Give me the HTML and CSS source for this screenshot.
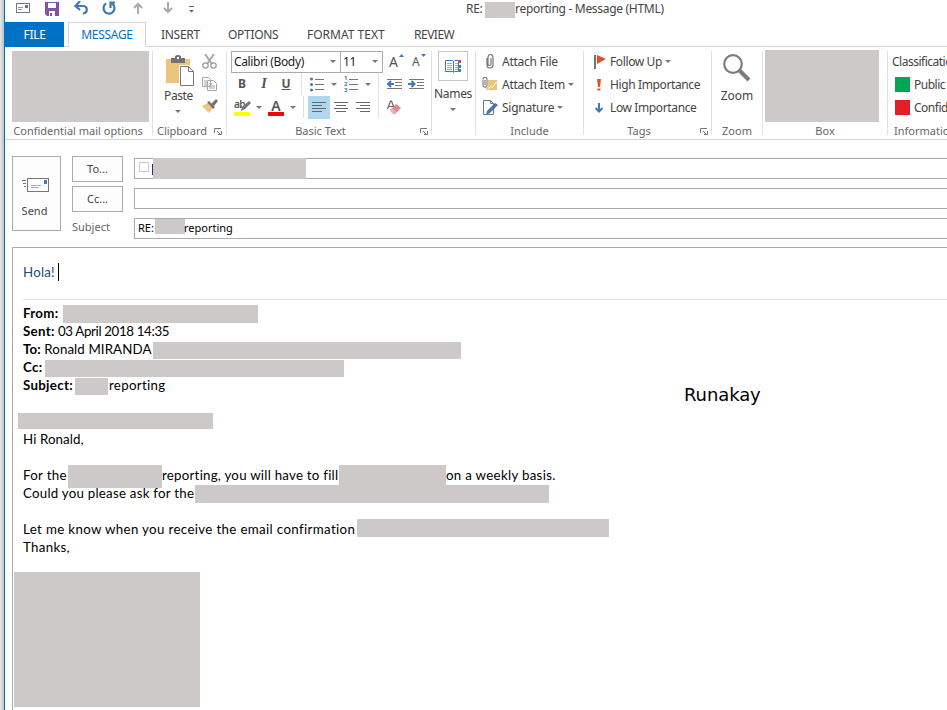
FILE: index.html
```html
<!DOCTYPE html>
<html lang="en">
<head>
    <meta charset="UTF-8">
    <meta name="viewport" content="width=device-width, initial-scale=1.0">
    <title>RE: reporting - Message (HTML)</title>
    <link rel="stylesheet" href="styles.css">
</head>
<body>
    <div class="window">
        <header class="titlebar">
            <div class="quick-access">
                <svg width="14" height="14" viewBox="0 0 14 14"><rect x=".5" y="2.5" width="13" height="9" fill="#fff" stroke="#777"/><path d="M2 6.500h5M2 8.500h4" stroke="#999"/><path d="M9 4h3v3H9z" fill="#3f7cbf"/></svg>
                <svg width="14" height="15" viewBox="0 0 14 15"><path d="M0 1h14v14H2l-2-2z" fill="#8551a8"/><path d="M3 2h8v5H3zM4 10h6v5H4z" fill="#fff"/><path d="M5 12h2v3H5z" fill="#8551a8"/></svg>
                <svg width="15" height="14" viewBox="0 0 15 14"><path d="M2 5h7c5 0 5 7 0 7.500M6 0L1.500 5 6 9" fill="none" stroke="#3f78b5" stroke-width="2.200"/></svg>
                <svg class="redo" width="14" height="14" viewBox="0 0 14 14"><path d="M4 2.500a5.500 5.500 0 1 0 6 0M8.500 7V1.500H13" fill="none" stroke="#3f78b5" stroke-width="2.200"/></svg>
                <svg width="10" height="13" viewBox="0 0 10 13"><path d="M5 12V2M1 6l4-4 4 4" fill="none" stroke="#aaa" stroke-width="2"/></svg>
                <svg class="next" width="10" height="13" viewBox="0 0 10 13"><path d="M5 0v10M1 6l4 4 4-4" fill="none" stroke="#aaa" stroke-width="2"/></svg>
                <svg class="customize" width="5" height="7" viewBox="0 0 5 7"><path d="M0 .5h5" stroke="#666"/><path d="M0 4h5L2.500 6.500z" fill="#666"/></svg>
            </div>
            <div class="title">
                <span class="title-re">RE:</span>
                <span class="redacted title-redacted"></span>
                <span class="title-text">reporting - Message (HTML)</span>
            </div>
        </header>

        <nav class="tabs">
            <span class="tab file">FILE</span>
            <span class="tab active">MESSAGE</span>
            <span class="tab insert">INSERT</span>
            <span class="tab options">OPTIONS</span>
            <span class="tab format">FORMAT TEXT</span>
            <span class="tab review">REVIEW</span>
        </nav>

        <section class="ribbon">
            <div class="group">
                <div class="redacted redacted-options"></div>
                <div class="group-label options-label">Confidential mail options</div>
            </div>

            <div class="group">
                <div class="clipboard">
                    <div class="paste">
                        <svg width="28" height="31" viewBox="0 0 28 31"><path d="M0 4h24v24H0z" fill="#ecc57c"/><path d="M5 3h4V1l2-1h2l2 1v2h4v5H5z" fill="#737373"/><path d="M11 2h2v2h-2z" fill="#fff"/><path d="M13 10h10l5 5v16H13z" fill="#fff"/><path d="M14.500 11.500h8l5 5v14h-13z" fill="#fff" stroke="#777"/><path d="M22.500 11.500v5h5" fill="none" stroke="#777"/></svg>
                        <span>Paste</span>
                        <i class="arrow"></i>
                    </div>
                    <div class="clip-tools">
                        <svg width="15" height="15" viewBox="0 0 15 15"><path d="M3 0l7 10M12 0L5 10" stroke="#aaa" stroke-width="2"/><circle cx="3.500" cy="11.500" r="2.700" fill="none" stroke="#999" stroke-width="1.200"/><circle cx="11.500" cy="11.500" r="2.700" fill="none" stroke="#999" stroke-width="1.200"/></svg>
                        <svg width="15" height="14" viewBox="0 0 15 14"><path d="M.5.5h6l2 2v7h-8zM5.500 3.500h6l3 3v7h-9z" fill="#fff" stroke="#aaa3ad"/><path d="M2 4h3M2 6h3M2 8h3M7 7h3M7 9h6M7 11h6" stroke="#aaa3ad"/></svg>
                        <svg width="16" height="14" viewBox="0 0 16 14"><path d="M0 7l6-3 5 5-4 5z" fill="#ecc57c"/><path d="M5 3l2-1 6 6-2 2z" fill="#737373"/><path d="M9 5l5-5 2 2-4 5z" fill="#737373"/></svg>
                    </div>
                </div>
                <div class="group-label">Clipboard<svg class="launcher" width="8" height="7" viewBox="0 0 8 7"><path d="M.5 5V.5H7M3 3l3 3M7.500 3v3.500H4" fill="none" stroke="#777"/></svg></div>
            </div>

            <div class="group">
                <div class="basic-text">
                    <div class="font-row">
                        <div class="select font-name">Calibri (Body)<i class="arrow"></i></div>
                        <div class="select font-size">11<i class="arrow"></i></div>
                        <div class="size-button grow">A<svg width="5" height="3" viewBox="0 0 5 3"><path d="M0 3l2.500-3L5 3z" fill="#3f78b5"/></svg></div>
                        <div class="size-button shrink">A<svg width="5" height="3" viewBox="0 0 5 3"><path d="M0 0h5L2.500 3z" fill="#3f78b5"/></svg></div>
                    </div>
                    <div class="format-row">
                        <b class="letter">B</b><em class="letter italic">I</em><u class="letter">U</u>
                        <i class="divider first"></i>
                        <svg width="14" height="15" viewBox="0 0 14 15"><path d="M5 2.500h9M5 7.500h9M5 12.500h9" stroke="#777"/><g fill="#3f78b5"><circle cx="1.500" cy="2" r="1.500"/><circle cx="1.500" cy="7.500" r="1.500"/><circle cx="1.500" cy="13" r="1.500"/></g></svg>
                        <i class="arrow"></i>
                        <div class="numbering">
                            <div class="digits"><span>1</span><span>2</span><span>3</span></div>
                            <svg width="9" height="15" viewBox="0 0 9 15"><path d="M0 2.500h9M0 7.500h9M0 12.500h9" stroke="#777"/></svg>
                        </div>
                        <i class="arrow"></i>
                        <i class="divider second"></i>
                        <svg width="16" height="12" viewBox="0 0 16 12"><path d="M1 1.500h15M9 4.500h7M9 7.500h7M1 10.500h15" stroke="#777"/><path d="M8 6H2M5 3L2 6l3 3" stroke="#3f78b5" stroke-width="2" fill="none"/></svg>
                        <svg class="indent" width="16" height="12" viewBox="0 0 16 12"><path d="M1 1.500h15M9 4.500h7M9 7.500h7M1 10.500h15" stroke="#777"/><path d="M0 6h6M3.500 3l3 3-3 3" stroke="#3f78b5" stroke-width="2" fill="none"/></svg>
                    </div>
                    <div class="color-row">
                        <div class="color-button highlight"><span>ab</span><svg width="10" height="10" viewBox="0 0 10 10"><path d="M8 0l2 2-6 6-4 2 1-4z" fill="#777"/></svg></div>
                        <i class="arrow"></i>
                        <div class="color-button font-color"><span>A</span></div>
                        <i class="arrow"></i>
                        <i class="divider first"></i>
                        <span class="align selected"><svg width="14" height="11" viewBox="0 0 14 11"><path d="M0 .5h14M0 3.500h10M0 6.500h14M0 9.500h10" stroke="#666"/></svg></span>
                        <span class="align"><svg width="14" height="11" viewBox="0 0 14 11"><path d="M0 .5h14M2 3.500h10M0 6.500h14M2 9.500h10" stroke="#666"/></svg></span>
                        <span class="align"><svg width="14" height="11" viewBox="0 0 14 11"><path d="M0 .5h14M4 3.500h10M0 6.500h14M4 9.500h10" stroke="#666"/></svg></span>
                        <i class="divider second"></i>
                        <svg width="15" height="15" viewBox="0 0 15 15"><path d="M.5 9L3.500 1h1L7.500 9M1.500 6.500h5" fill="none" stroke="#666" stroke-width="1.200"/><path d="M3 10l6-6 5 4-6 6H6z" fill="#e68497"/><path d="M3 10l2-2 4 4-2 2H6z" fill="#efb0bd"/></svg>
                    </div>
                </div>
                <div class="group-label basic-label">Basic Text<svg class="launcher far" width="8" height="7" viewBox="0 0 8 7"><path d="M.5 5V.5H7M3 3l3 3M7.500 3v3.500H4" fill="none" stroke="#777"/></svg></div>
            </div>

            <div class="group">
                <div class="names">
                    <span class="names-icon"><svg width="17" height="15" viewBox="0 0 17 15"><path d="M.5 1.500h7l1 1 1-1h4v11h-4l-1 1-1-1h-7z" fill="#fff" stroke="#3f78b5"/><path d="M8.500 2v11" stroke="#3f78b5"/><path d="M2 4.500h5M2 6.500h5M2 8.500h5M2 10.500h5M10 4.500h3M10 6.500h3M10 8.500h3M10 10.500h3" stroke="#aaa"/><path d="M14 1h2v3h-2z" fill="#d24726"/><path d="M14 6h2v3h-2z" fill="#3f78b5"/><path d="M14 10h2v3h-2z" fill="#2d9b60"/></svg></span>
                    <span>Names</span>
                    <i class="arrow"></i>
                </div>
            </div>

            <div class="group">
                <ul class="commands include">
                    <li><svg width="16" height="16" viewBox="0 0 16 16"><path d="M5 4v7c0 4 6 4 6 0V3.500c0-4-5-4-5 0V10c0 2 3 2 3 0V4" fill="none" stroke="#777" stroke-width="1.200"/></svg><span>Attach File</span></li>
                    <li><svg width="16" height="16" viewBox="0 0 16 16"><path d="M6 3h9v10H4z" fill="#ecc57c"/><path d="M6 11.500l3-2 1 1 5-6" fill="none" stroke="#fff"/><path d="M.6 0H6v10H.6z" fill="#fff"/><path d="M1 3v5c0 3 4 3 4 0V2.500c0-3-4-3-4 0M3 3v5" fill="none" stroke="#777" stroke-width="1.100"/></svg><span>Attach Item</span><i class="arrow"></i></li>
                    <li><svg width="16" height="16" viewBox="0 0 16 16"><path d="M1.500.500h7l3 3v11h-10z" fill="#fff" stroke="#777"/><path d="M8.500.500v3h3" fill="none" stroke="#777"/><path d="M13 3l3 2-8 8-4 2 1-4z" fill="#3f78b5"/></svg><span>Signature</span><i class="arrow"></i></li>
                </ul>
                <div class="group-label">Include</div>
            </div>

            <div class="group">
                <ul class="commands tags">
                    <li><svg width="12" height="16" viewBox="0 0 12 16"><path d="M0 1h2v14H0z" fill="#737373"/><path d="M3 1l9 4-9 5z" fill="#d9532f"/></svg><span>Follow Up</span><i class="arrow"></i></li>
                    <li><svg width="12" height="16" viewBox="0 0 12 16"><path d="M3 2h4l-1 8H4zM3.500 11.500h3v2h-3z" fill="#d9532f"/></svg><span>High Importance</span></li>
                    <li><svg width="12" height="16" viewBox="0 0 12 16"><path d="M5 3v8M1.500 8L5 11.500 8.500 8" fill="none" stroke="#3f78b5" stroke-width="2"/></svg><span>Low Importance</span></li>
                </ul>
                <div class="group-label tags-label">Tags<svg class="launcher far" width="8" height="7" viewBox="0 0 8 7"><path d="M.5 5V.5H7M3 3l3 3M7.500 3v3.500H4" fill="none" stroke="#777"/></svg></div>
            </div>

            <div class="group">
                <div class="zoom">
                    <svg width="28" height="28" viewBox="0 0 28 28"><circle cx="10" cy="10" r="8.800" fill="#fff" stroke="#7c7c7c" stroke-width="2.200"/><path d="M16 16l10 10" stroke="#7c7c7c" stroke-width="4"/></svg>
                    <span>Zoom</span>
                </div>
                <div class="group-label">Zoom</div>
            </div>

            <div class="group">
                <div class="redacted redacted-box"></div>
                <div class="group-label box-label">Box</div>
            </div>

            <div class="group classification">
                <ul class="commands">
                    <li><span>Classification</span></li>
                    <li><i class="swatch green"></i><span>Public</span></li>
                    <li><i class="swatch red"></i><span>Confidential</span></li>
                </ul>
                <div class="group-label">Information</div>
            </div>
        </section>

        <section class="header-form">
            <button class="send">
                <svg width="27" height="14" viewBox="0 0 27 14"><rect x="5.500" y=".5" width="21" height="13" fill="#fff" stroke="#777"/><path d="M9 7.500h10M9 9.500h8" stroke="#aaa"/><path d="M22 2h3v4h-3z" fill="#3f7cbf"/><path d="M0 2.500h4M1 5.500h3M2 8.500h2" stroke="#777"/></svg>
                <span>Send</span>
            </button>
            <div class="field-labels">
                <button class="pick">To...</button>
                <button class="pick">Cc...</button>
                <span class="subject-label">Subject</span>
            </div>
            <div class="fields">
                <div class="field"><i class="presence"></i><i class="link-edge"></i><span class="redacted redacted-to"></span></div>
                <div class="field"></div>
                <div class="field"><span class="field-re">RE:</span><span class="redacted redacted-subject"></span><span class="field-text">reporting</span></div>
            </div>
        </section>

        <main class="message">
            <div class="reply">Hola!<i class="caret"></i></div>
            <div class="original">
                <p><b class="from">From:</b><span class="redacted r-from"></span></p>
                <p><b class="sent">Sent:</b><span class="date">03 April 2018 14:35</span></p>
                <p><span class="to"><b>To:</b> Ronald MIRANDA</span><span class="redacted r-to"></span></p>
                <p><b class="cc">Cc:</b><span class="redacted r-cc"></span></p>
                <p><b class="subject">Subject:</b><span class="redacted r-subject"></span><span>reporting</span></p>
                <p></p>
                <p><span class="redacted r-name"></span></p>
                <p class="greeting">Hi Ronald,</p>
                <p></p>
                <p><span class="for-the">For the</span><span class="redacted r-report"></span><span class="fill">reporting, you will have to fill</span><span class="redacted r-fill"></span><span>on a weekly basis.</span></p>
                <p><span class="could">Could you please ask for the</span><span class="redacted r-ask"></span></p>
                <p></p>
                <p><span class="let">Let me know when you receive the email confirmation</span><span class="redacted r-confirm"></span></p>
                <p>Thanks,</p>
            </div>
            <div class="redacted r-signature"></div>
            <div class="note">Runakay</div>
        </main>
    </div>
</body>
</html>
```
FILE: styles.css
```css
* {
    box-sizing: border-box;
}
body {
    margin: 0;
    height: 710px;
    overflow: hidden;
    background: linear-gradient(90deg, #e8e8e8, #c0c0c0) 0 0 / 4px 100% no-repeat;
    color: #444;
    font-family: 'Noto Sans', 'Open Sans', sans-serif;
    font-size: 12px;
    line-height: 16px;
    white-space: nowrap;
}
svg {
    display: block;
    flex: none;
}
.window {
    height: 710px;
    margin-left: 4px;
    border-left: 1px solid #0072c6;
    overflow: hidden;
}
.redacted {
    display: block;
    flex: none;
    background: #cdc9c8;
}
.arrow {
    flex: none;
    border: 3px solid transparent;
    border-top-color: #777;
    border-bottom: 0;
}
.titlebar {
    display: flex;
    height: 22px;
}
.quick-access {
    display: flex;
    width: 461px;
    padding-left: 11px;
    height: 16px;
    align-items: center;
    gap: 15px;
}
.redo {
    margin: 0 2px 0 -2px;
}
.next {
    margin-left: 5px;
}
.customize {
    margin: 2px 0 0 1px;
}
.title {
    display: flex;
    padding-top: 1px;
    letter-spacing: -0.3px;
}
.title-re {
    width: 19px;
}
.title-redacted {
    width: 30px;
    height: 16px;
    margin-top: 1px;
}
.tabs {
    display: flex;
    height: 25px;
    border-bottom: 1px solid #d4d4d4;
    line-height: 25px;
}
.tab.file {
    width: 59px;
    height: 25px;
    margin-right: 4px;
    background: #0072c6;
    color: #fff;
    text-align: center;
    letter-spacing: -0.3px;
}
.tab.active {
    width: 78px;
    height: 25px;
    border: 1px solid #d4d4d4;
    border-bottom: 0;
    background: #fff;
    color: #0072c6;
    text-align: center;
    line-height: 24px;
    margin-right: 15px;
    letter-spacing: -0.3px;
}
.insert {
    width: 67px;
    letter-spacing: -0.3px;
}
.options {
    width: 79px;
    letter-spacing: -0.3px;
}
.format {
    width: 107px;
}
.review {
    letter-spacing: -0.5px;
}
.ribbon {
    display: grid;
    grid-template-columns: 148px 74px 205px 44px 108px 128px 51px 125px 1fr;
    height: 93px;
    padding-top: 4px;
    border-bottom: 1px solid #d4d4d4;
}
.group {
    display: flex;
    flex-direction: column;
    min-width: 0;
    height: 84px;
    border-right: 1px solid #e1e1e1;
}
.group-label {
    position: relative;
    display: flex;
    justify-content: center;
    align-items: center;
    height: 16px;
    margin: auto 0 -4px;
    color: #666;
    font-size: 11px;
}
.launcher {
    margin: 1px 0 0 7px;
}
.launcher.far {
    position: absolute;
    right: 3px;
    top: 5px;
    margin: 0;
}
.options-label {
    padding-right: 1px;
}
.basic-label {
    padding-right: 17px;
}
.tags-label {
    padding-right: 17px;
}
.redacted-options {
    width: 137px;
    height: 71px;
    margin-left: 7px;
}
.clipboard {
    display: flex;
    padding: 4px 0 0 10px;
}
.paste {
    display: flex;
    flex-direction: column;
    align-items: center;
    width: 31px;
    margin-right: 8px;
}
.paste span {
    margin: 2px 0 6px;
    letter-spacing: -0.4px;
}
.paste svg {
    margin-left: 3px;
}
.paste .arrow {
    margin-right: 2px;
}
.clip-tools {
    display: flex;
    flex-direction: column;
    gap: 8px;
    margin-top: -1px;
}
.basic-text {
    padding-left: 4px;
}
.font-row, .format-row, .color-row {
    display: flex;
    align-items: center;
}
.font-row, .format-row {
    height: 22px;
}
.select {
    display: flex;
    flex: none;
    justify-content: space-between;
    align-items: center;
    height: 22px;
    padding: 0 4px 1px 2px;
    border: 1px solid #ababab;
    color: #222;
    letter-spacing: -0.35px;
}
.font-name {
    width: 110px;
}
.font-size {
    width: 42px;
    border-left: 0;
}
.size-button {
    display: flex;
    flex: none;
    width: 15px;
    color: #555;
}
.grow {
    margin: 0 8px 0 6px;
    font-size: 14px;
}
.shrink {
    font-size: 12px;
}
.size-button svg {
    margin-left: 1px;
}
.letter {
    flex: none;
    width: 22px;
    text-align: center;
    color: #555;
}
u.letter {
    font-weight: bold;
}
.italic {
    font-family: 'Liberation Serif', serif;
    font-weight: bold;
    font-size: 14px;
}
.divider {
    flex: none;
    width: 1px;
    height: 22px;
    background: #e1e1e1;
}
.format-row .first {
    margin: 0 8px 0 4px;
}
.format-row .second {
    margin-right: 7px;
}
.format-row .arrow {
    margin: 0 7px;
}
.numbering {
    display: flex;
    flex: none;
    align-items: center;
    width: 14px;
}
.digits {
    display: flex;
    flex-direction: column;
    width: 5px;
    color: #3f78b5;
    font-size: 6px;
    font-weight: bold;
    line-height: 6px;
}
.indent {
    margin-left: 6px;
}
.color-row {
    height: 24px;
    padding-left: 3px;
}
.color-row .arrow {
    margin: 0 6px;
}
.color-row .first {
    margin: 0 4px 0 1px;
}
.color-row .second {
    margin: 0 8px 0 4px;
}
.color-button {
    display: flex;
    flex: none;
    width: 16px;
    height: 17px;
    color: #555;
    font-weight: 600;
}
.highlight {
    border-bottom: 4px solid #ff0;
    font-size: 10px;
    line-height: 10px;
    letter-spacing: -0.5px;
}
.highlight svg {
    margin: 2px 0 0 -4px;
}
.font-color {
    justify-content: center;
    border-bottom: 4px solid #f00;
    font-size: 14px;
    line-height: 13px;
}
.align {
    display: flex;
    flex: none;
    align-items: center;
    justify-content: center;
    width: 22px;
    height: 23px;
}
.align.selected {
    background: #b1d6f0;
}
.names {
    display: flex;
    flex-direction: column;
    align-items: center;
    margin-right: 1px;
    letter-spacing: -0.3px;
}
.names-icon {
    display: flex;
    align-items: center;
    justify-content: center;
    width: 30px;
    height: 30px;
    border: 1px solid #c6c6c6;
    margin-bottom: 5px;
}
.names .arrow {
    margin-top: 6px;
}
.commands {
    margin: -1px 0 0;
    padding: 0 0 0 6px;
    list-style: none;
    letter-spacing: -0.25px;
}
.commands li {
    display: flex;
    align-items: center;
    height: 23px;
}
.commands svg {
    margin-right: 4px;
}
.commands .arrow {
    margin-left: 3px;
}
.commands.tags {
    padding-left: 10px;
    letter-spacing: -0.38px;
}
.zoom {
    display: flex;
    flex-direction: column;
    align-items: center;
    padding-top: 3px;
}
.zoom span {
    margin-top: 6px;
}
.redacted-box {
    width: 114px;
    height: 72px;
    margin: -1px 0 0 2px;
}
.classification {
    border-right: 0;
}
.classification .commands {
    padding-left: 4px;
    letter-spacing: -0.5px;
}
.classification .group-label {
    justify-content: flex-start;
    padding-left: 6px;
}
.swatch {
    flex: none;
    width: 15px;
    height: 15px;
    margin: 0 4px 0 3px;
}
.green {
    background: #00a651;
}
.red {
    background: #e31e25;
}
.header-form {
    display: flex;
    padding: 16px 0 0 7px;
    height: 107px;
}
.send {
    display: flex;
    flex-direction: column;
    align-items: center;
    width: 49px;
    height: 75px;
    padding: 21px 4px 0 0;
    border: 1px solid #ababab;
    background: #fdfdfd;
    color: #444;
    font: inherit;
    font-size: 11px;
}
.send svg {
    margin: 0 0 11px 1px;
}
.field-labels {
    display: flex;
    flex-direction: column;
    gap: 4px;
    width: 51px;
    margin: 0 11px;
}
.pick {
    height: 26px;
    padding: 0;
    border: 1px solid #ababab;
    background: #fdfdfd;
    color: #444;
    font: inherit;
    font-size: 11px;
}
.subject-label {
    margin-top: 3px;
    color: #666;
    font-size: 11px;
}
.fields {
    display: flex;
    flex-direction: column;
    flex: 1;
    gap: 9px;
    padding-top: 2px;
}
.field {
    display: flex;
    height: 21px;
    border: 1px solid #ababab;
    border-right: 0;
    color: #000;
    font-size: 11px;
    line-height: 18px;
}
.presence {
    width: 10px;
    height: 10px;
    margin: 3px 3px 0 4px;
    border: 1px solid #ccc;
}
.link-edge {
    width: 1px;
    height: 11px;
    margin-top: 5px;
    background: #2a2a90;
}
.redacted-to {
    width: 153px;
    height: 21px;
    margin-top: -1px;
}
.field-re {
    width: 17px;
    margin-left: 3px;
}
.redacted-subject {
    width: 30px;
    height: 15px;
}
.field-text {
    margin-left: -1px;
}
.message {
    position: relative;
    height: 470px;
    margin-left: 7px;
    border: 1px solid #a5a9b0;
    border-right: 0;
    border-bottom: 0;
    color: #000;
    font-family: Lato, sans-serif;
    font-size: 13.300px;
    font-variant-ligatures: none;
    letter-spacing: 0.3px;
    line-height: 17px;
}
.reply {
    display: flex;
    height: 51px;
    padding: 15px 0 0 10px;
    color: #1f497d;
    letter-spacing: 0.2px;
    line-height: 19px;
}
.caret {
    width: 1px;
    height: 18px;
    margin-left: 3px;
    background: #000;
}
.original {
    margin-left: 10px;
    padding-top: 5px;
    border-top: 1px solid #e1e1e1;
}
.original p {
    display: flex;
    height: 18px;
    margin: 0;
}
.from {
    width: 40px;
}
.sent {
    width: 35px;
}
.date {
    letter-spacing: -0.35px;
}
.to {
    width: 130px;
    letter-spacing: 0.1px;
}
.cc {
    width: 22px;
}
.subject {
    width: 52px;
}
.greeting {
    letter-spacing: 0.1px;
}
.r-from {
    width: 195px;
    height: 18px;
}
.r-to {
    width: 308px;
    height: 17px;
    margin-top: 1px;
}
.r-cc {
    width: 299px;
    height: 17px;
    margin-top: 1px;
}
.r-subject {
    width: 33px;
    height: 17px;
    margin: 1px 1px 0 0;
}
.r-name {
    width: 195px;
    height: 16px;
    margin: 0 0 0 -5px;
}
.for-the {
    width: 45px;
}
.r-report {
    width: 94px;
    height: 23px;
    margin-top: -2px;
}
.fill {
    width: 177px;
    letter-spacing: 0.24px;
}
.r-fill {
    width: 107px;
    height: 20px;
    margin-top: -2px;
}
.could {
    width: 172px;
    letter-spacing: 0.24px;
}
.r-ask {
    width: 354px;
    height: 18px;
}
.let {
    width: 334px;
    letter-spacing: 0.35px;
}
.r-confirm {
    width: 252px;
    height: 18px;
    margin-top: -2px;
}
.r-signature {
    width: 186px;
    height: 135px;
    margin: 15px 0 0 1px;
}
.note {
    position: absolute;
    left: 671px;
    top: 136px;
    font-family: 'DejaVu Sans', sans-serif;
    font-size: 18px;
    letter-spacing: -0.1px;
    line-height: 22px;
}
```
